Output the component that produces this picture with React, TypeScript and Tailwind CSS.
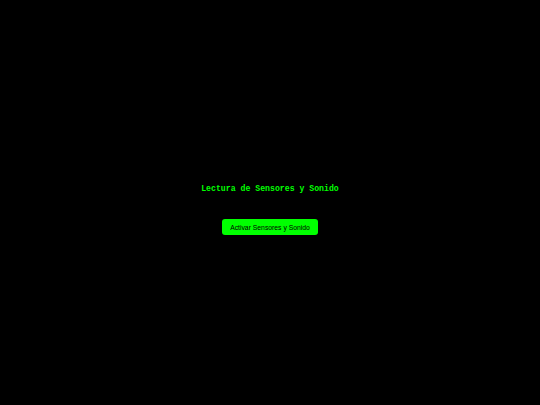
export default function App() {
  return (
    <div className="min-h-screen w-full bg-black flex flex-col items-center justify-center pt-[15px]">
      <h1 className="font-['Liberation_Mono',monospace] text-[8.2px] font-bold text-[#00ff00] leading-none">
        Lectura de Sensores y Sonido
      </h1>
      <button className="mt-[25px] w-[96px] h-[16px] rounded-[3px] bg-[#00ff00] text-black text-[6.8px] leading-[16px] pt-px font-['Liberation_Sans',Arial,sans-serif]">
        Activar Sensores y Sonido
      </button>
    </div>
  );
}
